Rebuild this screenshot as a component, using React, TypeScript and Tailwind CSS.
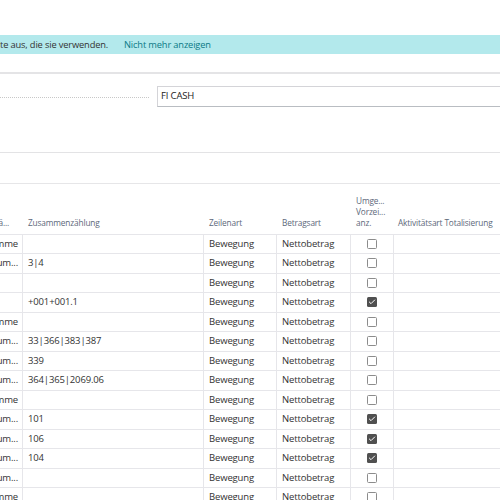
import { Check } from 'lucide-react'

type Row = {
  typ: string
  sum: string
  checked: boolean
}

const rows: Row[] = [
  { typ: 'Summe', sum: '', checked: false },
  { typ: 'Sum...', sum: '3|4', checked: false },
  { typ: '', sum: '', checked: false },
  { typ: '', sum: '+001+001.1', checked: true },
  { typ: 'Summe', sum: '', checked: false },
  { typ: 'Sum...', sum: '33|366|383|387', checked: false },
  { typ: 'Sum...', sum: '339', checked: false },
  { typ: 'Sum...', sum: '364|365|2069.06', checked: false },
  { typ: 'Summe', sum: '', checked: false },
  { typ: 'Sum...', sum: '101', checked: true },
  { typ: 'Sum...', sum: '106', checked: true },
  { typ: 'Sum...', sum: '104', checked: true },
  { typ: 'Sum...', sum: '', checked: false },
  { typ: 'Summe', sum: '', checked: false },
]

function Checkbox({ checked }: { checked: boolean }) {
  if (checked) {
    return (
      <div className="w-[10px] h-[10px] rounded-[1.5px] bg-[#505050] flex items-center justify-center">
        <Check className="w-[8px] h-[8px] text-white" strokeWidth={3} />
      </div>
    )
  }
  return <div className="w-[10px] h-[10px] rounded-[1.5px] border border-[#8c8c8c] bg-white" />
}

export default function App() {
  return (
    <div
      className="w-[500px] h-[500px] overflow-hidden bg-white text-[#333] tracking-[-0.15px]"
      style={{ fontFamily: '"Open Sans", "Noto Sans", sans-serif' }}
    >
      <div className="h-[35px]" />

      {/* Info banner */}
      <div className="h-[19px] bg-[#b3e9ec] flex items-center text-[9.3px] whitespace-nowrap">
        <span className="w-[124px]">te aus, die sie verwenden.</span>
        <span className="text-[#0b7a86]">Nicht mehr anzeigen</span>
      </div>

      <div className="h-[18px]" />
      <div className="h-[1.5px] bg-[#e4e4e6]" />

      {/* Field */}
      <div className="h-[78px] pt-[12px] overflow-hidden">
        <div className="flex items-center h-[21px] mr-[-10px]">
          <div className="w-[149px] border-b border-dotted border-[#c8c8c8] mt-[2px]" />
          <div className="ml-[8px] flex-1 h-[21px] border border-[#d4d4d8] border-b-[#b9bdc2] flex items-center pl-[3px] text-[9.5px] text-[#222]">
            FI CASH
          </div>
        </div>
      </div>
      <div className="h-[1.5px] bg-[#e3e3e5]" />

      <div className="h-[29.5px]" />
      <div className="h-[1.5px] bg-[#e6e6e8]" />

      {/* Table header */}
      <div className="flex h-[50.5px] items-end text-[8.3px] text-[#5d687a] leading-[11px] pb-[6px] border-b border-[#e6e6ea]">
        <div className="w-[23px] overflow-hidden flex justify-end pr-[14px] whitespace-nowrap">
          <span>Zeilentä...</span>
        </div>
        <div className="w-[181px] pl-[5px]">Zusammenzählung</div>
        <div className="w-[73px] pl-[5px]">Zeilenart</div>
        <div className="w-[74px] pl-[5px]">Betragsart</div>
        <div className="w-[43px] pl-[5px]">
          <div>Umge...</div>
          <div>Vorzei...</div>
          <div>anz.</div>
        </div>
        <div className="flex-1 pl-[4px] whitespace-nowrap">Aktivitätsart Totalisierung</div>
      </div>

      {/* Rows */}
      {rows.map((r, i) => (
        <div key={i} className="flex h-[19.5px] items-center text-[9.5px] border-b border-[#e6e6ea]">
          <div className="w-[23px] h-full overflow-hidden flex items-center justify-end pr-[4px] whitespace-nowrap border-r border-[#e6e6ea]">
            <span>{r.typ}</span>
          </div>
          <div className="w-[181px] h-full flex items-center pl-[5px] border-r border-[#e6e6ea]">{r.sum}</div>
          <div className="w-[73px] h-full flex items-center pl-[5px] border-r border-[#e6e6ea]">Bewegung</div>
          <div className="w-[74px] h-full flex items-center pl-[5px] border-r border-[#e6e6ea]">Nettobetrag</div>
          <div className="w-[43px] h-full flex items-center justify-center border-r border-[#e6e6ea]">
            <Checkbox checked={r.checked} />
          </div>
          <div className="flex-1" />
        </div>
      ))}
    </div>
  )
}
